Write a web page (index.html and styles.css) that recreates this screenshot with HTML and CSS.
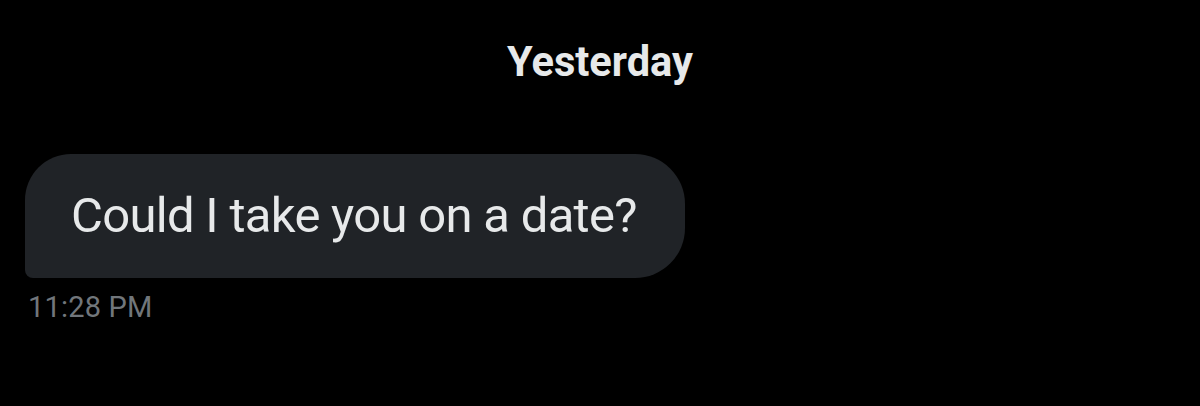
FILE: index.html
```html
<!DOCTYPE html>
<html>
<head>
<meta charset="utf-8">
<link rel="stylesheet" href="styles.css">
</head>
<body>
<main class="chat">
  <div class="day">Yesterday</div>
  <div class="msg">
    <div class="bubble">Could I take you on a date?</div>
    <div class="time">11:28 PM</div>
  </div>
</main>
</body>
</html>
```
FILE: styles.css
```css
html, body {
  margin: 0;
  padding: 0;
  background: #000;
}
.chat {
  width: 1200px;
  height: 406px;
  display: flex;
  flex-direction: column;
  font-family: Roboto, "Liberation Sans", sans-serif;
}
.day {
  text-align: center;
  color: #e7e9ea;
  font-weight: 700;
  font-size: 41.6px;
  line-height: 48px;
  padding-top: 38px;
}
.msg {
  display: flex;
  flex-direction: column;
  align-items: flex-start;
  padding-left: 25px;
  margin-top: 68px;
}
.bubble {
  background: #202327;
  color: #e7e9ea;
  font-size: 49px;
  line-height: 60px;
  padding: 32px 48px 32px 46px;
  border-radius: 46px 50px 50px 8px;
  letter-spacing: -0.7px;
}
.time {
  color: #71767b;
  font-size: 29px;
  line-height: 34px;
  margin-top: 12px;
  padding-left: 3px;
  letter-spacing: 0.2px;
}
```
